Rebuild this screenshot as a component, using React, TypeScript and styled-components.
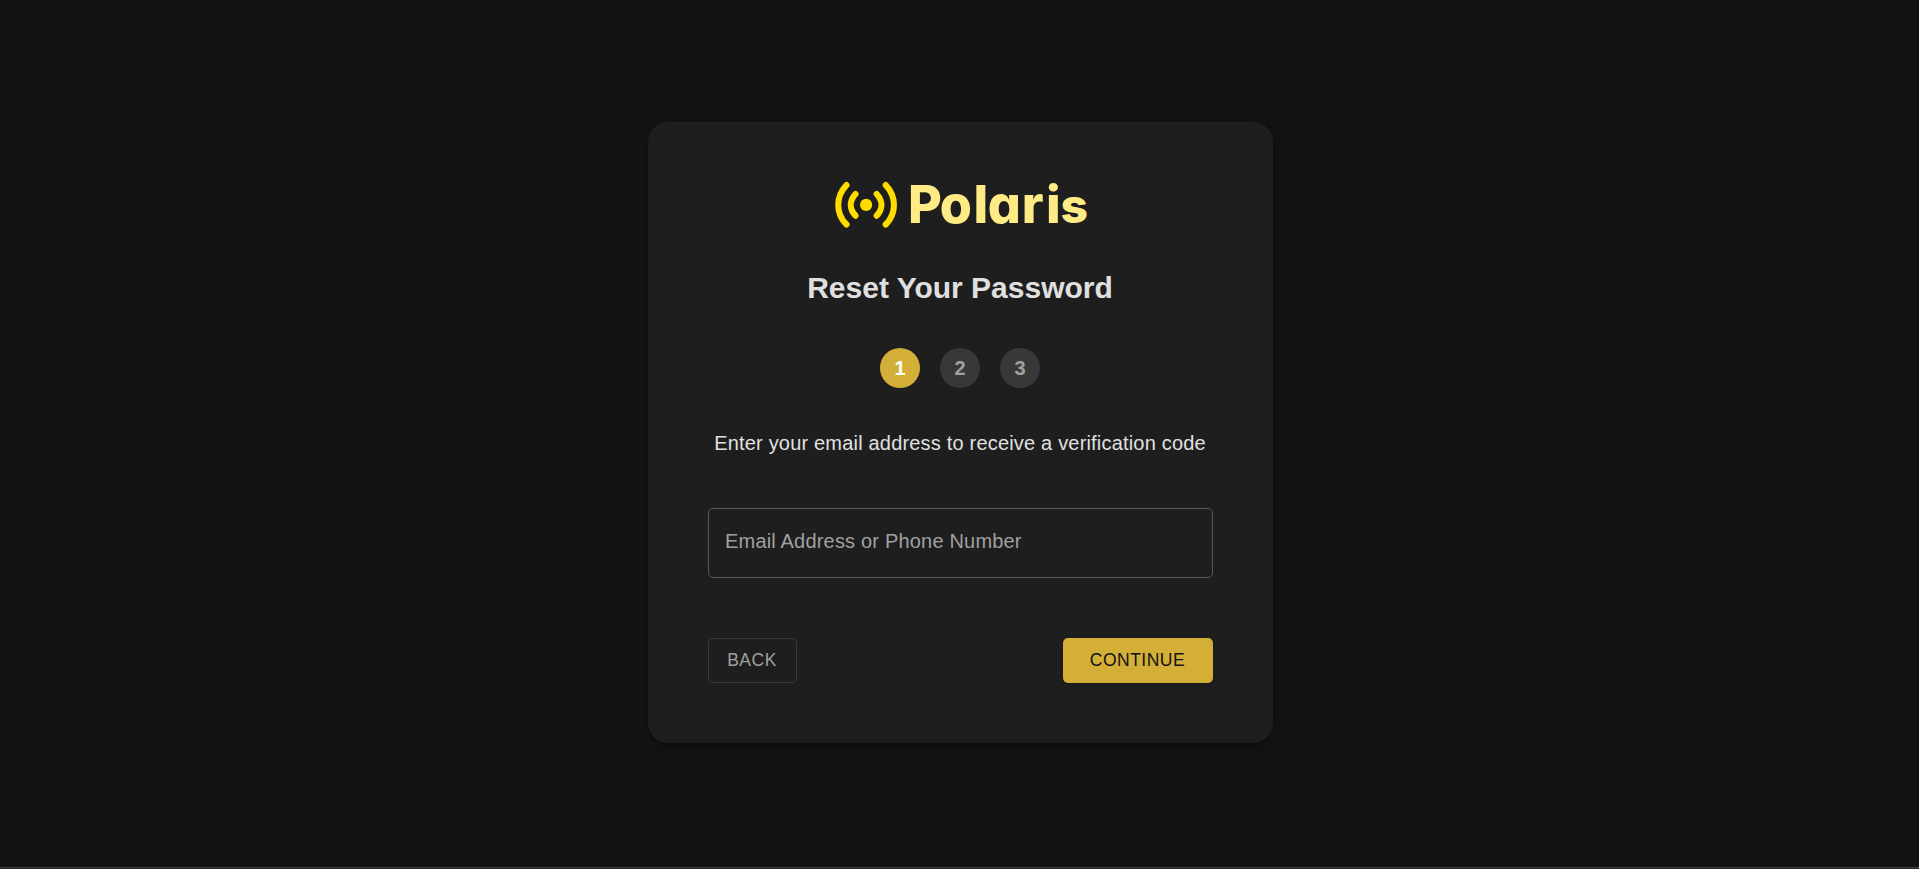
import React from "react";
import styled, { createGlobalStyle } from "styled-components";

const GlobalStyle = createGlobalStyle`
  * { box-sizing: border-box; }
  html, body { margin: 0; background: #121212; overflow: hidden; }
  body, button, input { font-family: "Liberation Sans", Arial, sans-serif; }
`;

const Page = styled.main`
  height: 867px;
  display: flex;
  flex-direction: column;
  align-items: center;
  padding-top: 122px;
  padding-left: 1px;
`;

const BottomEdge = styled.div`
  height: 2px;
  border-top: 1px solid #46403a;
  background: #2a221c;
`;

const Card = styled.section`
  width: 625px;
  height: 621px;
  flex: none;
  padding: 60px;
  display: flex;
  flex-direction: column;
  align-items: center;
  background: #1e1e1e;
  border-radius: 20px;
  box-shadow: 0 3px 5px rgba(0, 0, 0, 0.28);
`;

const Logo = styled.svg`
  display: block;
  width: 250px;
  height: 46px;
  flex: none;
  overflow: visible;
`;

const Wordmark = styled.text`
  font-family: Inter, sans-serif;
  font-weight: 800;
  font-size: 52px;
  font-feature-settings: "cv11";
  fill: #ffeb85;
`;

const Title = styled.h1`
  margin: 41px 0 0;
  font-size: 30px;
  line-height: 37px;
  font-weight: 700;
  color: #e0e0e0;
  white-space: nowrap;
`;

const Steps = styled.div`
  display: flex;
  gap: 20px;
  margin-top: 42px;
`;

const Step = styled.div<{ $active?: boolean }>`
  width: 40px;
  height: 40px;
  border-radius: 50%;
  display: flex;
  align-items: center;
  justify-content: center;
  font-size: 20px;
  font-weight: 700;
  color: ${(p) => (p.$active ? "#ffffff" : "#a0a0a0")};
  background: ${(p) => (p.$active ? "#d4af37" : "#383838")};
`;

const Hint = styled.p`
  margin: 40px 0 0;
  font-size: 20px;
  line-height: 30px;
  letter-spacing: 0.188px;
  color: #e0e0e0;
  white-space: nowrap;
`;

const Field = styled.input`
  width: 100%;
  height: 70px;
  margin-top: 50px;
  padding: 0 16.5px 3px;
  flex: none;
  font-size: 20px;
  letter-spacing: 0.188px;
  color: #e0e0e0;
  background: transparent;
  border: 1px solid #575757;
  border-radius: 5px;
  outline: none;
  &::placeholder { color: #a0a0a0; opacity: 1; }
`;

const Actions = styled.div`
  width: 100%;
  margin-top: 60px;
  display: flex;
  justify-content: space-between;
`;

const Button = styled.button<{ $primary?: boolean }>`
  width: ${(p) => (p.$primary ? 150 : 89)}px;
  height: 45px;
  padding: 0 0 1px;
  font-size: 17.5px;
  letter-spacing: 0.5px;
  text-transform: uppercase;
  border-radius: 5px;
  border: ${(p) => (p.$primary ? "0" : "1px solid #3a3a3a")};
  background: ${(p) => (p.$primary ? "#d4af37" : "transparent")};
  color: ${(p) => (p.$primary ? "#121212" : "#a0a0a0")};
  box-shadow: ${(p) => (p.$primary ? "0 1px 3px rgba(0, 0, 0, 0.25)" : "none")};
`;

const PolarisLogo = () => (
  <Logo viewBox="0 0 250 46" role="img" aria-label="Polaris">
    <g fill="none" stroke="#ffdc00" strokeWidth="6.1" strokeLinecap="round">
      <path d="M11.5 3.1C.5 14.5.5 31.5 11.5 42.5" />
      <path d="M20.5 12C14.2 19 14.2 27 20.5 33.7" />
      <path d="M41.7 12C48 19 48 27 41.7 33.7" />
      <path d="M50.7 3.1C61.7 14.5 61.7 31.5 50.7 42.5" />
    </g>
    <circle cx="31.1" cy="22.9" r="6.1" fill="#ffdc00" />
    <Wordmark y="41.3" x="72.9 104.7 138.6 152.7 186.8 211">
      Polari<tspan x="225.6" fontSize="48">s</tspan>
    </Wordmark>
  </Logo>
);

export default function App() {
  return (
    <>
      <GlobalStyle />
      <Page>
        <Card>
          <PolarisLogo />
          <Title>Reset Your Password</Title>
          <Steps>
            <Step $active>1</Step>
            <Step>2</Step>
            <Step>3</Step>
          </Steps>
          <Hint>Enter your email address to receive a verification code</Hint>
          <Field placeholder="Email Address or Phone Number" />
          <Actions>
            <Button>Back</Button>
            <Button $primary>Continue</Button>
          </Actions>
        </Card>
      </Page>
      <BottomEdge />
    </>
  );
}
